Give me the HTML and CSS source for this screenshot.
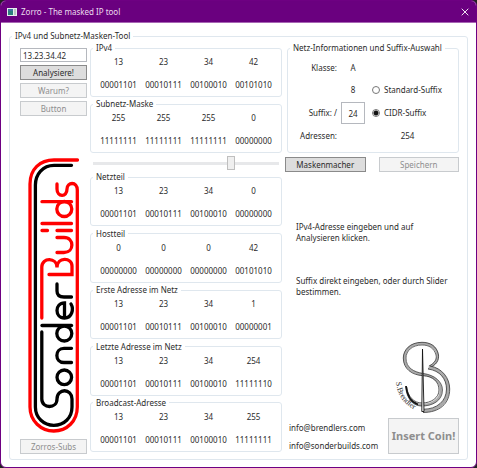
FILE: index.html
```html
<!DOCTYPE html>
<html lang="de">
<head>
<meta charset="utf-8">
<title>Zorro - The masked IP tool</title>
<link rel="stylesheet" href="styles.css">
</head>
<body>
<div class="window">
  <header class="titlebar">
    <svg class="app-icon" viewBox="0 0 10 8" aria-hidden="true">
      <rect width="10" height="8" fill="#e8eeee"/>
      <rect x="1" y="1" width="5" height="6" fill="#2c7f7c"/>
      <rect x="1" y="1" width="5" height="2" fill="#3f6fa0"/>
      <rect x="7" y="1" width="2" height="6" fill="#b9c9c4"/>
    </svg>
    <h1 class="title">Zorro - The masked IP tool</h1>
    <button class="close" type="button" aria-label="Schließen">
      <svg viewBox="0 0 8 8"><path d="M0.7 0.7L7.3 7.3M7.3 0.7L0.7 7.3" stroke="#fff" stroke-width="0.9"/></svg>
    </button>
  </header>
  <main class="content">
    <fieldset class="group tool">
      <legend>IPv4 und Subnetz-Masken-Tool</legend>
      <div class="columns">
        <div class="side">
          <input class="box address" type="text" value="13.23.34.42" aria-label="IPv4-Adresse">
          <button class="btn" type="button">Analysiere!</button>
          <button class="btn" type="button" disabled>Warum?</button>
          <button class="btn" type="button" disabled>Button</button>
          <svg class="builds-logo" viewBox="27 156 53 277" role="img" aria-label="SonderBuilds">
            <g fill="none" stroke="#f00" stroke-width="3.3" stroke-linecap="round">
              <path d="M77.5 159H54C40 159 30 168 30 183V406C30 420 41 430 53.800 430C67 430 77.300 420 77.300 406V189C77.300 180 67 181 67 188C67 197 57 196 57 188V183"/>
              <path d="M42 200.700H71.500"/>
              <circle cx="64.300" cy="208" r="7.500"/>
              <path d="M42 222.500H71.500M42 229.500H47.500M57 229.500H71.500"/>
              <path d="M57 236.500H64C74.500 236.500 74.500 251.500 64 251.500H57"/>
              <path d="M49 273.500H72V265C72 256 57 256 57 266.500C57 256 41.800 256 41.800 266V317"/>
            </g>
            <g fill="none" stroke="#000" stroke-width="3.300" stroke-linecap="round">
              <path d="M71.500 164.300H54C43 164.300 35.400 173 35.400 184V406C35.400 417 44 424.300 53.800 424.300C64 424.300 72 417 72 406V398C72 387 57 387 57 398C57 408 41.800 408 41.800 398V331"/>
              <circle cx="64.300" cy="376.300" r="7.300"/>
              <path d="M71.500 347.300H64C54.500 347.300 54.500 361.500 64 361.500H71.500"/>
              <path d="M42 324.500H71.500"/>
              <circle cx="64.300" cy="332.500" r="7.500"/>
              <path d="M64.500 317V302C54.500 302 54.500 317 64.500 317C72 317 74 308 71 303"/>
              <path d="M71.500 296H64Q57 296 57 290V283"/>
            </g>
          </svg>
          <button class="btn" type="button" disabled>Zorros-Subs</button>
        </div>

        <div class="networks">
          <fieldset class="group octets">
            <legend>IPv4</legend>
            <span>13</span><span>23</span><span>34</span><span>42</span>
            <span>00001101</span><span>00010111</span><span>00100010</span><span>00101010</span>
          </fieldset>
          <fieldset class="group octets">
            <legend>Subnetz-Maske</legend>
            <span>255</span><span>255</span><span>255</span><span>0</span>
            <span>11111111</span><span>11111111</span><span>11111111</span><span>00000000</span>
          </fieldset>
          <input class="slider" type="range" min="0" max="32" value="24" aria-label="Suffix">
          <fieldset class="group octets">
            <legend>Netzteil</legend>
            <span>13</span><span>23</span><span>34</span><span>0</span>
            <span>00001101</span><span>00010111</span><span>00100010</span><span>00000000</span>
          </fieldset>
          <fieldset class="group octets">
            <legend>Hostteil</legend>
            <span>0</span><span>0</span><span>0</span><span>42</span>
            <span>00000000</span><span>00000000</span><span>00000000</span><span>00101010</span>
          </fieldset>
          <fieldset class="group octets">
            <legend>Erste Adresse im Netz</legend>
            <span>13</span><span>23</span><span>34</span><span>1</span>
            <span>00001101</span><span>00010111</span><span>00100010</span><span>00000001</span>
          </fieldset>
          <fieldset class="group octets">
            <legend>Letzte Adresse im Netz</legend>
            <span>13</span><span>23</span><span>34</span><span>254</span>
            <span>00001101</span><span>00010111</span><span>00100010</span><span>11111110</span>
          </fieldset>
          <fieldset class="group octets">
            <legend>Broadcast-Adresse</legend>
            <span>13</span><span>23</span><span>34</span><span>255</span>
            <span>00001101</span><span>00010111</span><span>00100010</span><span>11111111</span>
          </fieldset>
        </div>

        <div class="info">
          <fieldset class="group details">
            <legend>Netz-Informationen und Suffix-Auswahl</legend>
            <span class="name">Klasse:</span><span class="value">A</span><span></span>
            <span></span><span class="value">8</span>
            <label class="choice"><input type="radio" name="suffix-kind"> Standard-Suffix</label>
            <label class="name" for="suffix">Suffix: /</label>
            <input class="box suffix" id="suffix" type="text" value="24">
            <label class="choice"><input type="radio" name="suffix-kind" checked> CIDR-Suffix</label>
            <span class="name">Adressen:</span><span></span><span class="count">254</span>
          </fieldset>
          <div class="actions">
            <button class="btn" type="button">Maskenmacher</button>
            <button class="btn" type="button" disabled>Speichern</button>
          </div>
          <div class="hints">
            <p>IPv4-Adresse eingeben und auf<br>Analysieren klicken.</p>
            <p>Suffix direkt eingeben, oder durch Slider bestimmen.</p>
          </div>
          <div class="footer">
            <div class="mails">
              <a href="mailto:info@brendlers.com">info@brendlers.com</a>
              <a href="mailto:info@sonderbuilds.com">info@sonderbuilds.com</a>
            </div>
            <div class="coin">
              <svg class="brendler-logo" viewBox="388 340 70 76" role="img" aria-label="S. Brendler">
                <g fill="none" stroke="#333">
                  <path stroke-width="2.400" stroke="#aaa" d="M429 367C436 364 438 360 437.500 355C436 347 430 343.500 422 343.500C411 343.500 404.500 350 404.500 358C404.500 368 413 373 423 374.500C434 376 441 382 441 390C441 400 432 405 422 405C413 405 407 398 406.500 387"/>
                  <path stroke-width="0.700" d="M429 366C435 363 437 359 436 355C434 348 429 345 422 345C412 345 406 351 406 358C406 368 414 372 423 373.500C435 375 442.500 382 442.500 390C442.500 401 432 406 422 406C413 406 407 399 406 386"/>
                  <path stroke-width="0.800" d="M428 368.500C437 365 439 360 438.500 355C437 346 430 342.300 422 342.300C410 342.300 403.300 350 403.300 358C403.300 369 412 375 423 375.700C433 376 439 382 439 390C439 398 431 403 422 403C414 403 408 397 406 386"/>
                  <path stroke-width="1.600" stroke="#111" d="M406 386C407 396 411 402 418 404.500"/>
                  <path stroke-width="3" stroke="#aaa" d="M429 367.500C441 369 448 379 448 389C448 402 438 411 423 411"/>
                  <path stroke-width="0.800" d="M428 369C440 370.500 446.500 379 446.500 389C446.500 401 437 409.300 423 409.300M430 366C442 368 449.700 378 449.700 389C449.700 404 439 412.500 423 412.500"/>
                  <path fill="#fff" stroke="#111" stroke-width="0.900" d="M422.500 349L421.800 411.500H424Z"/>
                </g>
                <path id="signature" fill="none" d="M396 382Q398 404 420 412"/>
                <text class="signature"><textPath href="#signature">S.Brendler</textPath></text>
              </svg>
              <button class="btn insert" type="button" disabled>Insert Coin!</button>
            </div>
          </div>
        </div>
      </div>
    </fieldset>
  </main>
</div>
</body>
</html>
```
FILE: styles.css
```css
* {
  box-sizing: border-box;
}

body {
  margin: 0;
  background: #222;
  color: #2b2b2b;
  font: 8px/12px "Noto Sans", "Open Sans", sans-serif;
}

button,
input {
  margin: 0;
  font: inherit;
  color: inherit;
}

.window {
  display: flex;
  flex-direction: column;
  min-height: 100vh;
  border: 1px solid #6e0082;
  border-radius: 6px;
  background: #fff;
  overflow: hidden;
}

.titlebar {
  display: flex;
  align-items: center;
  gap: 4px;
  height: 22px;
  padding: 0 7px 0 6px;
  border-bottom: 1px solid #a765b4;
  background: #6a007f;
  color: #eadcee;
}

.app-icon {
  width: 10px;
  height: 8px;
}

.title {
  flex: 1;
  margin: 0;
  font-size: 8px;
  font-weight: 400;
}

.close {
  display: flex;
  padding: 0;
  border: 0;
  background: none;
}

.close svg {
  width: 8px;
  height: 8px;
}

.content {
  display: flex;
  flex: 1;
  padding: 7px 8px;
}

.group {
  min-width: 0;
  margin: 0;
  padding: 0;
  border: 1px solid #dfe7ee;
  border-radius: 3px;
}

.group legend {
  margin-left: 2px;
  padding: 0 3px;
  white-space: nowrap;
}

.tool {
  display: flex;
  flex: 1;
}

.columns {
  display: grid;
  flex: 1;
  grid-template-columns: 67px 192fr 174fr;
  gap: 3px;
  padding: 0 8px 5px 10px;
}

.side {
  display: flex;
  flex-direction: column;
  gap: 3px;
  padding-top: 6px;
}

.box {
  width: 100%;
  padding: 0 2px;
  border: 1px solid #b5b8be;
  background: #fff;
}

.address {
  height: 14px;
}

.btn {
  height: 15px;
  padding: 0;
  border: 1px solid #8a8a8a;
  background: #dddddd;
  line-height: 12px;
  text-align: center;
}

.btn:disabled {
  border-color: #c8cbce;
  background: #f4f4f4;
  color: #8e8e8e;
}

.builds-logo {
  flex: 1;
  width: 53px;
  min-height: 277px;
  margin: 38px 0 2px 7px;
}

.networks {
  display: flex;
  flex-direction: column;
  justify-content: space-between;
  padding-bottom: 2px;
}

.octets {
  display: grid;
  grid-template-columns: repeat(4, 1fr);
  row-gap: 11px;
  padding: 2px 5px 5px;
}

.group.octets legend {
  margin-left: -3px;
}

.octets span {
  text-align: center;
}

.slider {
  appearance: none;
  height: 14px;
  margin: 2px 3px -1px;
  background: none;
}

.slider::-webkit-slider-runnable-track {
  height: 3px;
  background: #e7e8ea;
}

.slider::-webkit-slider-thumb {
  appearance: none;
  width: 8px;
  height: 14px;
  margin-top: -6px;
  border: 1px solid #bfbfbf;
  background: #efefef;
}

.info {
  display: flex;
  flex-direction: column;
}

.details {
  display: grid;
  grid-template-columns: 53px 24px 1fr;
  grid-template-rows: 22px 22px 24px 22px;
  align-items: center;
  margin-left: 2px;
  padding: 3px 0 5px;
}

.name {
  padding-right: 4px;
  text-align: right;
}

.value,
.suffix {
  text-align: center;
}

.suffix {
  height: 22px;
}

.choice,
.count {
  margin-left: 7px;
  white-space: nowrap;
}

.count {
  margin-right: 15px;
  text-align: center;
}

.choice {
  display: flex;
  align-items: center;
  gap: 4px;
}

.choice input {
  appearance: none;
  width: 8px;
  height: 8px;
  border: 1px solid #777;
  border-radius: 50%;
  background: #fff;
}

.choice input:checked {
  background: radial-gradient(circle, #111 2px, #fff 3px);
}

.actions {
  display: grid;
  grid-template-columns: 1fr 1fr;
  gap: 13px;
  margin-top: 4px;
}

.hints {
  margin: 49px 8px 0 11px;
  line-height: 11px;
}

.hints p {
  margin: 0 0 32px;
}

.footer {
  display: flex;
  align-items: flex-end;
  justify-content: space-between;
  margin: auto 0 0 4px;
}

.mails {
  display: flex;
  flex-direction: column;
  gap: 6px;
  padding-bottom: 2px;
}

.mails a {
  color: inherit;
  text-decoration: none;
}

.coin {
  display: flex;
  flex-direction: column;
  gap: 2px;
}

.brendler-logo {
  width: 70px;
  height: 76px;
}

.signature {
  fill: #333;
  font: 8px "Liberation Serif", serif;
}

.insert {
  width: 71px;
  height: 36px;
  font-size: 11px;
  font-weight: 700;
}
```
